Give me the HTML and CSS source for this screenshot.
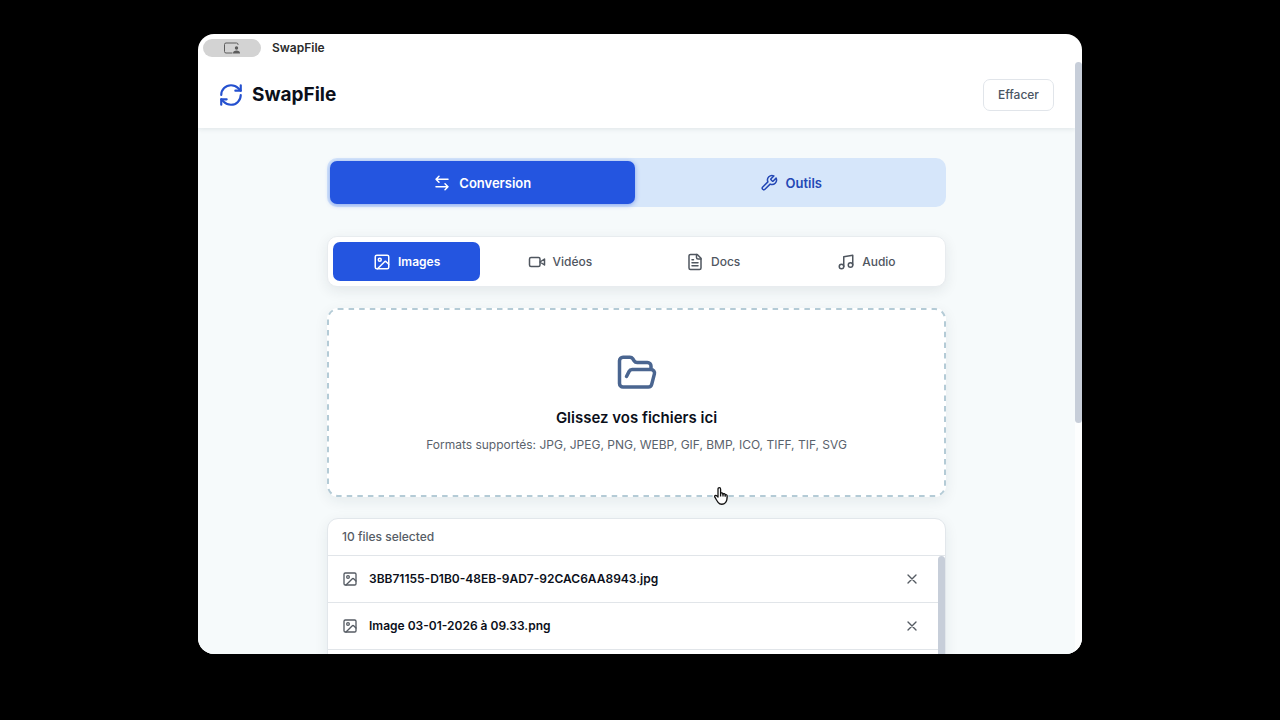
FILE: index.html
```html
<!DOCTYPE html>
<html lang="fr">
<head>
<meta charset="utf-8">
<title>SwapFile</title>
<link rel="stylesheet" href="styles.css">
</head>
<body>
<svg class="defs" aria-hidden="true">
  <symbol id="image" viewBox="0 0 24 24"><rect x="3" y="3" width="18" height="18" rx="2"/><circle cx="9" cy="9" r="2"/><path d="m21 15-3.1-3.1a2 2 0 0 0-2.8 0L6 21"/></symbol>
  <symbol id="close" viewBox="0 0 24 24"><path d="M18 6 6 18M6 6l12 12"/></symbol>
</svg>
<div class="window">
  <div class="titlebar">
    <span class="share-pill">
      <svg viewBox="0 0 18 14" aria-hidden="true"><path d="M9.500 12H3a1.500 1.500 0 0 1-1.500-1.500v-7A1.500 1.500 0 0 1 3 2h10.500A1.500 1.500 0 0 1 15 3.500V4"/><circle cx="13.500" cy="7" r="1.700" class="solid"/><path class="solid" d="M10 12.500c0-2.200 1.500-3 3.500-3s3.500.8 3.500 3z"/></svg>
    </span>
    <span>SwapFile</span>
  </div>
  <div class="viewport">
    <div class="page">
      <header class="header">
        <h1 class="brand">
          <svg class="icon brand-icon" viewBox="0 0 24 24" aria-hidden="true"><path d="M3 12a9 9 0 0 1 9-9 9.750 9.750 0 0 1 6.740 2.740L21 8"/><path d="M21 3v5h-5"/><path d="M21 12a9 9 0 0 1-9 9 9.750 9.750 0 0 1-6.740-2.740L3 16"/><path d="M8 16H3v5"/></svg>
          SwapFile
        </h1>
        <button class="clear" type="button">Effacer</button>
      </header>
      <main class="content">
        <nav class="modes">
          <button class="mode mode-active" type="button">
            <svg class="icon" viewBox="0 0 24 24" aria-hidden="true"><path d="M8 3 4 7l4 4M4 7h16M16 21l4-4-4-4M20 17H4"/></svg>Conversion
          </button>
          <button class="mode" type="button">
            <svg class="icon" viewBox="0 0 24 24" aria-hidden="true"><path d="M14.700 6.300a1 1 0 0 0 0 1.400l1.600 1.600a1 1 0 0 0 1.400 0l3.770-3.770a6 6 0 0 1-7.940 7.940l-6.910 6.910a2.120 2.120 0 0 1-3-3l6.910-6.910a6 6 0 0 1 7.940-7.940l-3.760 3.760z"/></svg>Outils
          </button>
        </nav>
        <nav class="types">
          <button class="type type-active" type="button">
            <svg class="icon" aria-hidden="true"><use href="#image"/></svg>Images
          </button>
          <button class="type" type="button">
            <svg class="icon" viewBox="0 0 24 24" aria-hidden="true"><path d="m22 8-6 4 6 4V8Z"/><rect x="2" y="6" width="14" height="12" rx="2"/></svg>Vidéos
          </button>
          <button class="type" type="button">
            <svg class="icon" viewBox="0 0 24 24" aria-hidden="true"><path d="M15 2H6a2 2 0 0 0-2 2v16a2 2 0 0 0 2 2h12a2 2 0 0 0 2-2V7Z"/><path d="M14 2v4a2 2 0 0 0 2 2h4M10 9H8M16 13H8M16 17H8"/></svg>Docs
          </button>
          <button class="type" type="button">
            <svg class="icon" viewBox="0 0 24 24" aria-hidden="true"><path d="M9 18V5l12-2v13"/><circle cx="6" cy="18" r="3"/><circle cx="18" cy="16" r="3"/></svg>Audio
          </button>
        </nav>
        <section class="dropzone">
          <svg class="dashes" aria-hidden="true"><rect x="1" y="1" rx="10"/></svg>
          <svg class="icon folder" viewBox="0 0 24 24" aria-hidden="true"><path d="m6 14 1.500-2.900A2 2 0 0 1 9.240 10H20a2 2 0 0 1 1.940 2.500l-1.540 6a2 2 0 0 1-1.950 1.500H4a2 2 0 0 1-2-2V5a2 2 0 0 1 2-2h3.900a2 2 0 0 1 1.690.9l.81 1.200a2 2 0 0 0 1.670.9H18a2 2 0 0 1 2 2v2"/></svg>
          <h2 class="drop-title">Glissez vos fichiers ici</h2>
          <p class="drop-formats">Formats supportés: JPG, JPEG, PNG, WEBP, GIF, BMP, ICO, TIFF, TIF, SVG</p>
          <svg class="pointer" viewBox="0 0 16 20" aria-hidden="true"><path d="M5 11V3.200C5 1.200 7.600 1.200 7.600 3.200V7.500c.4-1 2.200-.8 2.400.6.500-.8 2-.5 2.200.8.700-.6 2-.2 2 1.200 0 3.500-.3 5-1.700 6.500-2 2.200-5.500 2.200-7.200 0C3.900 14.800 3 13 1.800 11.200 1 9.800 2.700 8.800 3.700 9.800Z"/><path d="M7.600 7.500v3M10 8.100v2.400M12.200 8.900v1.800"/></svg>
        </section>
        <section class="files">
          <h2 class="files-head">10 files selected</h2>
          <div class="files-body">
            <ul class="file-list">
              <li class="file"><svg class="icon" aria-hidden="true"><use href="#image"/></svg><span class="file-name">3BB71155-D1B0-48EB-9AD7-92CAC6AA8943.jpg</span><button class="remove" type="button" aria-label="Supprimer"><svg class="icon" aria-hidden="true"><use href="#close"/></svg></button></li>
              <li class="file"><svg class="icon" aria-hidden="true"><use href="#image"/></svg><span class="file-name">Image 03-01-2026 à 09.33.png</span><button class="remove" type="button" aria-label="Supprimer"><svg class="icon" aria-hidden="true"><use href="#close"/></svg></button></li>
              <li class="file"></li>
            </ul>
            <div class="thumb"></div>
          </div>
        </section>
      </main>
    </div>
    <div class="scrollbar"><div class="thumb page-thumb"></div></div>
  </div>
</div>
</body>
</html>
```
FILE: styles.css
```css
* { box-sizing: border-box; }
body {
  margin: 0;
  height: 100vh;
  padding: 34px 198px 66px;
  overflow: hidden;
  background: #000;
  color: #0b0f1a;
  font-family: Inter, "Liberation Sans", sans-serif;
  font-size: 12px;
  line-height: 20px;
}
h1, h2, p, ul { margin: 0; padding: 0; }
button { font: inherit; color: inherit; border: 0; background: none; padding: 0; cursor: pointer; }
.defs { display: none; }
.icon {
  width: 18px;
  height: 18px;
  flex: none;
  fill: none;
  stroke: currentColor;
  stroke-width: 2;
  stroke-linecap: round;
  stroke-linejoin: round;
}
.window {
  height: 100%;
  display: flex;
  flex-direction: column;
  overflow: hidden;
  border-radius: 16px;
  background: #fff;
}
.titlebar {
  display: flex;
  align-items: center;
  gap: 11px;
  height: 28px;
  flex: none;
  padding: 0 5px;
  color: #2b2b2b;
  font-weight: 600;
}
.share-pill {
  display: flex;
  align-items: center;
  justify-content: center;
  width: 58px;
  height: 18px;
  border-radius: 9px;
  background: #d3d3d3;
}
.share-pill svg { width: 18px; height: 14px; fill: none; stroke: #5c5c5c; }
.share-pill .solid { fill: #5c5c5c; stroke: none; }
.viewport { display: flex; flex: 1; min-height: 0; }
.page { flex: 1; min-width: 0; overflow: hidden; background: #f6fafb; }
.scrollbar { width: 7px; flex: none; background: #fdfefe; }
.thumb { width: 7px; flex: none; border-radius: 4px; background: #c7ced9; }
.page-thumb { height: 61%; }
.header {
  position: relative;
  display: flex;
  align-items: center;
  justify-content: space-between;
  height: 66px;
  padding: 0 21px 0 20px;
  background: #fff;
  box-shadow: 0 1px 5px rgba(20, 40, 60, 0.1);
}
.brand { display: flex; align-items: center; gap: 8px; font-size: 19px; font-weight: 700; line-height: 24px; }
.brand-icon { width: 26px; height: 26px; color: #2450cf; }
.clear {
  padding: 5px 14px;
  border: 1px solid #e1e5ea;
  border-radius: 7px;
  color: #4b5563;
  font-weight: 500;
}
.content {
  display: flex;
  flex-direction: column;
  max-width: 619px;
  margin: 0 auto;
  padding-top: 30px;
}
.modes {
  display: grid;
  grid-template-columns: 1fr 1fr;
  gap: 4px;
  margin-bottom: 29px;
  padding: 3px;
  border-radius: 10px;
  background: #d6e6fa;
}
.mode, .type { display: flex; align-items: center; justify-content: center; }
.mode { gap: 8px; height: 43px; border-radius: 7px; color: #2448b5; font-size: 13px; font-weight: 600; }
.mode-active { background: #2455e0; color: #fff; box-shadow: 0 1px 5px rgba(36, 85, 224, 0.45); }
.types {
  display: grid;
  grid-template-columns: repeat(4, 1fr);
  gap: 6px;
  margin-bottom: 21px;
  padding: 5px;
  border: 1px solid #e8ecef;
  border-radius: 10px;
  background: #fff;
  box-shadow: 0 4px 14px rgba(30, 45, 60, 0.09);
}
.type { gap: 7px; height: 39px; border-radius: 7px; color: #4f565f; font-weight: 500; }
.type-active { background: #2455e0; color: #fff; font-weight: 600; }
.dropzone {
  position: relative;
  display: flex;
  flex-direction: column;
  align-items: center;
  margin-bottom: 21px;
  padding: 44px 20px 42px;
  border-radius: 11px;
  background: #fff;
  box-shadow: 0 4px 14px rgba(30, 45, 60, 0.08);
}
.dashes { position: absolute; inset: 0; width: 100%; height: 100%; }
.dashes rect {
  width: calc(100% - 2px);
  height: calc(100% - 2px);
  fill: none;
  stroke: #b4cbd6;
  stroke-width: 2;
  stroke-dasharray: 5.5 5.1;
}
.folder { width: 42px; height: 42px; color: #4a6590; }
.drop-title { margin-top: 12px; font-size: 15px; font-weight: 600; line-height: 24px; }
.drop-formats { margin-top: 5px; color: #5a626c; }
.pointer { position: absolute; left: 386px; bottom: -9px; width: 16px; height: 20px; fill: #fff; stroke: #111; stroke-width: 1.3; stroke-linejoin: round; }
.files {
  overflow: hidden;
  border: 1px solid #e2e7eb;
  border-radius: 11px;
  background: #fff;
  box-shadow: 0 4px 14px rgba(30, 45, 60, 0.08);
}
.files-head { padding: 8px 14px; border-bottom: 1px solid #e1e5e9; color: #565d66; font-size: 12px; font-weight: 500; line-height: 20px; }
.files-body { display: flex; }
.file-list { flex: 1; list-style: none; }
.file { display: flex; align-items: center; gap: 11px; height: 47px; padding: 0 18px 0 14px; border-bottom: 1px solid #e1e5e9; }
.file .icon { width: 16px; height: 16px; color: #555b63; }
.file-name { flex: 1; font-weight: 600; }
.remove { display: flex; }
.remove .icon { stroke-width: 2; }
```
